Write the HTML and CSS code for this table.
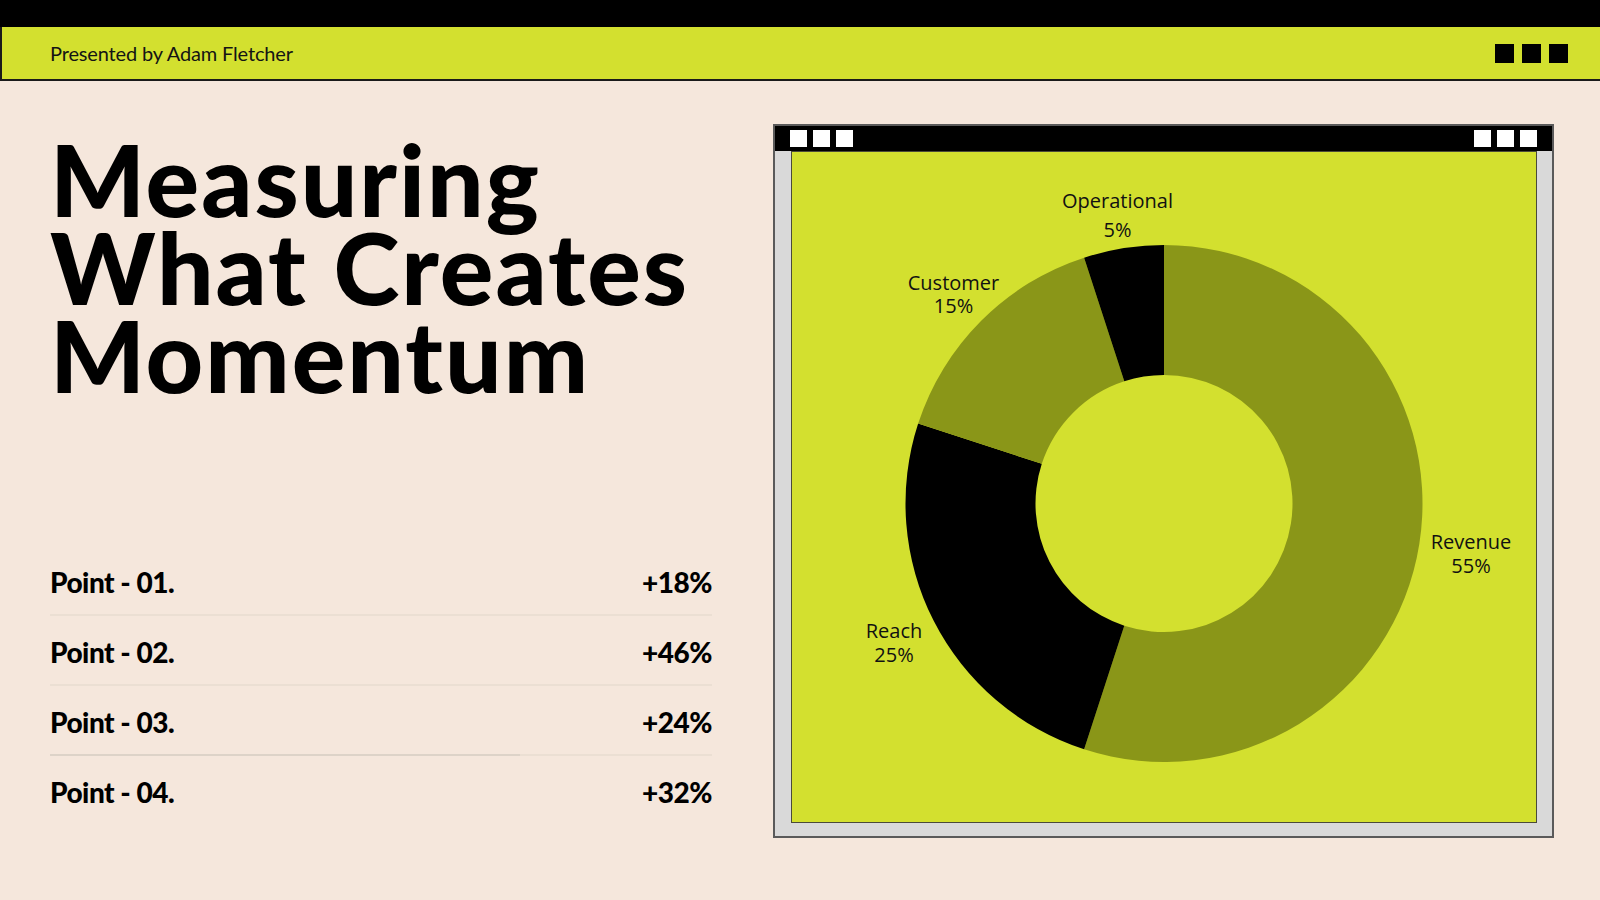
FILE: index.html
```html
<!DOCTYPE html>
<html lang="en">
<head>
<meta charset="utf-8">
<title>Measuring What Creates Momentum</title>
<link rel="stylesheet" href="styles.css">
</head>
<body>
<div class="slide">
  <div class="topbar"></div>
  <header class="header">
    <span class="presenter">Presented by Adam Fletcher</span>
    <div class="squares">
      <span class="sq"></span><span class="sq"></span><span class="sq"></span>
    </div>
  </header>
  <main class="main">
    <section class="left">
      <h1 class="title">Measuring<br>What Creates<br>Momentum</h1>
      <div class="points">
        <div class="row"><span>Point - 01.</span><span>+18%</span></div>
        <div class="rule"></div>
        <div class="row"><span>Point - 02.</span><span>+46%</span></div>
        <div class="rule"></div>
        <div class="row"><span>Point - 03.</span><span>+24%</span></div>
        <div class="rule rule-progress"></div>
        <div class="row"><span>Point - 04.</span><span>+32%</span></div>
      </div>
    </section>
    <section class="window">
      <div class="titlebar">
        <div class="wsq-group"><span class="wsq"></span><span class="wsq"></span><span class="wsq"></span></div>
        <div class="wsq-group"><span class="wsq"></span><span class="wsq"></span><span class="wsq"></span></div>
      </div>
      <div class="frame">
        <div class="panel">
          <svg class="chart" viewBox="0 0 746 672" width="746" height="672">
            <path class="olive" d="M 373 94 A 258.5 258.5 0 1 1 293.12 598.35 L 333.29 474.71 A 128.5 128.5 0 1 0 373 224 Z"/>
            <path class="dark" d="M 293.12 598.35 A 258.5 258.5 0 0 1 127.15 272.62 L 250.79 312.79 A 128.5 128.5 0 0 0 333.29 474.71 Z"/>
            <path class="olive" d="M 127.15 272.62 A 258.5 258.5 0 0 1 293.12 106.65 L 333.29 230.29 A 128.5 128.5 0 0 0 250.79 312.79 Z"/>
            <path class="dark" d="M 293.12 106.65 A 258.5 258.5 0 0 1 373 94 L 373 224 A 128.5 128.5 0 0 0 333.29 230.29 Z"/>
            <g class="labels">
              <text x="326.5" y="57.3">Operational</text>
              <text x="326.5" y="86.3">5%</text>
              <text x="162.5" y="139">Customer</text>
              <text x="162.5" y="162.3">15%</text>
              <text x="680" y="398.4">Revenue</text>
              <text x="680" y="421.7">55%</text>
              <text x="103" y="487">Reach</text>
              <text x="103" y="510.5">25%</text>
            </g>
          </svg>
        </div>
      </div>
    </section>
  </main>
</div>
</body>
</html>
```
FILE: styles.css
```css
html, body {
  margin: 0;
  padding: 0;
}
body {
  background: #f5e7dc;
  width: 1600px;
  height: 900px;
  overflow: hidden;
  font-family: "Lato", "Liberation Sans", sans-serif;
  color: #0a0a0a;
}
.slide {
  width: 1600px;
  height: 900px;
  display: flex;
  flex-direction: column;
}
.topbar {
  height: 27px;
  background: #000;
}
.header {
  height: 52px;
  background: #d3e02f;
  border-left: 2px solid #1a1a1a;
  border-bottom: 2px solid #1a1a1a;
  display: flex;
  align-items: center;
  justify-content: space-between;
  padding: 0 32px 0 48px;
}
.presenter {
  font-family: "Lato", sans-serif;
  font-size: 20px;
  line-height: 24px;
  letter-spacing: -0.15px;
  color: #141414;
}
.squares {
  display: flex;
  gap: 8px;
}
.sq {
  width: 19px;
  height: 19px;
  background: #000;
}
.main {
  display: flex;
  padding-left: 50px;
}
.left {
  width: 662px;
  display: flex;
  flex-direction: column;
}
.title {
  margin: 53px 0 0 0;
  font-family: "Lato", sans-serif;
  font-weight: 900;
  font-size: 100px;
  line-height: 88px;
  letter-spacing: 2px;
  color: #000;
}
.points {
  margin-top: 148px;
  display: flex;
  flex-direction: column;
}
.row {
  display: flex;
  justify-content: space-between;
  padding: 22px 0 18px 0;
  font-family: "Lato", sans-serif;
  font-weight: 900;
  font-size: 28px;
  line-height: 28px;
  letter-spacing: -0.5px;
  color: #000;
}
.rule {
  height: 2px;
  background: #ebdfd3;
}
.rule-progress {
  background: linear-gradient(to right, #ddd3c8 0, #ddd3c8 71%, #ebdfd3 71%);
}
.window {
  margin: 43px 0 0 61px;
  width: 777px;
  height: 710px;
  border: 2px solid #5a5a5a;
  background: #d9d9d9;
  display: flex;
  flex-direction: column;
}
.titlebar {
  height: 25px;
  background: #000;
  display: flex;
  align-items: center;
  justify-content: space-between;
  padding: 0 15px;
}
.wsq-group {
  display: flex;
  gap: 6px;
}
.wsq {
  width: 17px;
  height: 17px;
  background: #fff;
}
.frame {
  flex: 1;
  padding: 0 15px 13px 16px;
  display: flex;
}
.panel {
  width: 744px;
  height: 670px;
  background: #d3e02f;
  border: 1px solid #4a4a3a;
  overflow: hidden;
}
.chart {
  display: block;
  margin: -1px 0 0 -1px;
}
.olive {
  fill: #8a9618;
}
.dark {
  fill: #000;
}
.labels text {
  font-family: "Open Sans", "Noto Sans", sans-serif;
  font-size: 20px;
  fill: #111;
  text-anchor: middle;
}
```
